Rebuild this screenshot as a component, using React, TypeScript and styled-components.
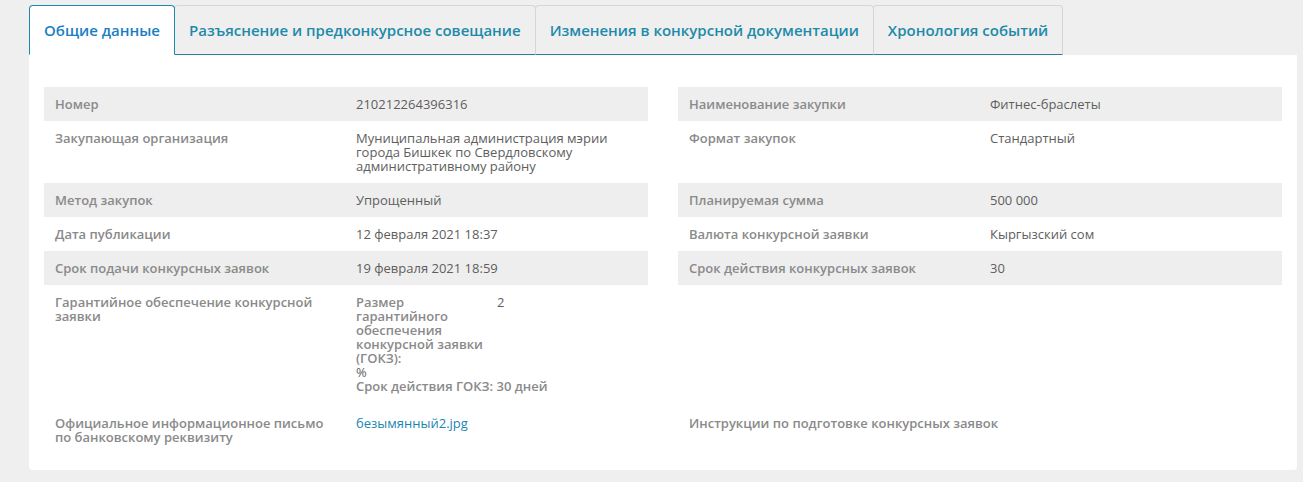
import React from 'react';
import styled, { createGlobalStyle } from 'styled-components';

const GlobalStyle = createGlobalStyle`
  html, body {
    margin: 0;
    padding: 0;
    background: #efefef;
    font-family: "Open Sans", "Liberation Sans", sans-serif;
  }
`;

const Page = styled.div`
  padding: 5px 6px 13px 29px;
`;

const TabBar = styled.div`
  display: flex;
  height: 50px;
`;

const Tab = styled.div<{ $active?: boolean }>`
  display: flex;
  align-items: center;
  padding: 0 14px;
  margin-right: -1px;
  font-size: 15px;
  font-weight: 600;
  color: ${(p) => (p.$active ? '#1a7ec1' : '#1d8aaa')};
  background: ${(p) => (p.$active ? '#fff' : '#efefef')};
  border: 1px solid ${(p) => (p.$active ? '#1f86b0' : '#d6d6d6')};
  border-bottom: ${(p) => (p.$active ? '1px solid #fff' : '1px solid #2a7f9e')};
  border-radius: 4px 4px 0 0;
  position: relative;
  z-index: ${(p) => (p.$active ? 1 : 0)};
  cursor: pointer;
`;

const Panel = styled.div`
  background: #fff;
  border-radius: 0 0 4px 4px;
  padding: 32px 15px 16px 15px;
  display: flex;
  flex-direction: column;
`;

const Row = styled.div`
  display: flex;
  gap: 30px;
`;

const Pair = styled.div<{ $striped?: boolean }>`
  width: 604px;
  display: grid;
  grid-template-columns: 302px 1fr;
  background: ${(p) => (p.$striped ? '#eeeeee' : 'transparent')};
`;

const Label = styled.div<{ $wide?: boolean }>`
  grid-column: ${(p) => (p.$wide ? '1 / span 2' : 'auto')};
  padding: 10px 11px;
  font-size: 13px;
  line-height: 14px;
  font-weight: 600;
  color: #8a8a8a;
`;

const Value = styled.div`
  padding: 10px 10px;
  font-size: 13px;
  line-height: 14px;
  color: #5e5e5e;
`;

const Link = styled.a`
  color: #1b86b0;
  text-decoration: none;
`;

const GuaranteeBlock = styled.div`
  padding-bottom: 3px;
`;

const Guarantee = styled.div`
  display: grid;
  grid-template-columns: 141px auto;
`;

const Strong = styled.span`
  font-weight: 600;
  color: #8a8a8a;
`;

type Item = { label: string; value?: React.ReactNode } | null;

const rows: [Item, Item][] = [
  [
    { label: 'Номер', value: '210212264396316' },
    { label: 'Наименование закупки', value: 'Фитнес-браслеты' },
  ],
  [
    {
      label: 'Закупающая организация',
      value: 'Муниципальная администрация мэрии города Бишкек по Свердловскому административному району',
    },
    { label: 'Формат закупок', value: 'Стандартный' },
  ],
  [
    { label: 'Метод закупок', value: 'Упрощенный' },
    { label: 'Планируемая сумма', value: '500 000' },
  ],
  [
    { label: 'Дата публикации', value: '12 февраля 2021 18:37' },
    { label: 'Валюта конкурсной заявки', value: 'Кыргызский сом' },
  ],
  [
    { label: 'Срок подачи конкурсных заявок', value: '19 февраля 2021 18:59' },
    { label: 'Срок действия конкурсных заявок', value: '30' },
  ],
  [
    {
      label: 'Гарантийное обеспечение конкурсной заявки',
      value: (
        <GuaranteeBlock>
          <Guarantee>
            <Strong>Размер гарантийного обеспечения конкурсной заявки (ГОКЗ):</Strong>
            <span>2</span>
          </Guarantee>
          <div>%</div>
          <Strong>Срок действия ГОКЗ: 30 дней</Strong>
        </GuaranteeBlock>
      ),
    },
    null,
  ],
  [
    {
      label: 'Официальное информационное письмо по банковскому реквизиту',
      value: <Link href="#">безымянный2.jpg</Link>,
    },
    { label: 'Инструкции по подготовке конкурсных заявок' },
  ],
];

const tabs = [
  'Общие данные',
  'Разъяснение и предконкурсное совещание',
  'Изменения в конкурсной документации',
  'Хронология событий',
];

const renderPair = (item: Item, striped: boolean) => (
  <Pair $striped={striped && !!item}>
    {item && (
      <>
        <Label $wide={item.value === undefined}>{item.label}</Label>
        {item.value !== undefined && <Value>{item.value}</Value>}
      </>
    )}
  </Pair>
);

const App: React.FC = () => {
  return (
    <Page>
      <GlobalStyle />
      <TabBar>
        {tabs.map((t, i) => (
          <Tab key={t} $active={i === 0}>
            {t}
          </Tab>
        ))}
      </TabBar>
      <Panel>
        {rows.map(([left, right], i) => (
          <Row key={i}>
            {renderPair(left, i % 2 === 0 && i < 5)}
            {renderPair(right, i % 2 === 0 && i < 5)}
          </Row>
        ))}
      </Panel>
    </Page>
  );
};

export default App;
